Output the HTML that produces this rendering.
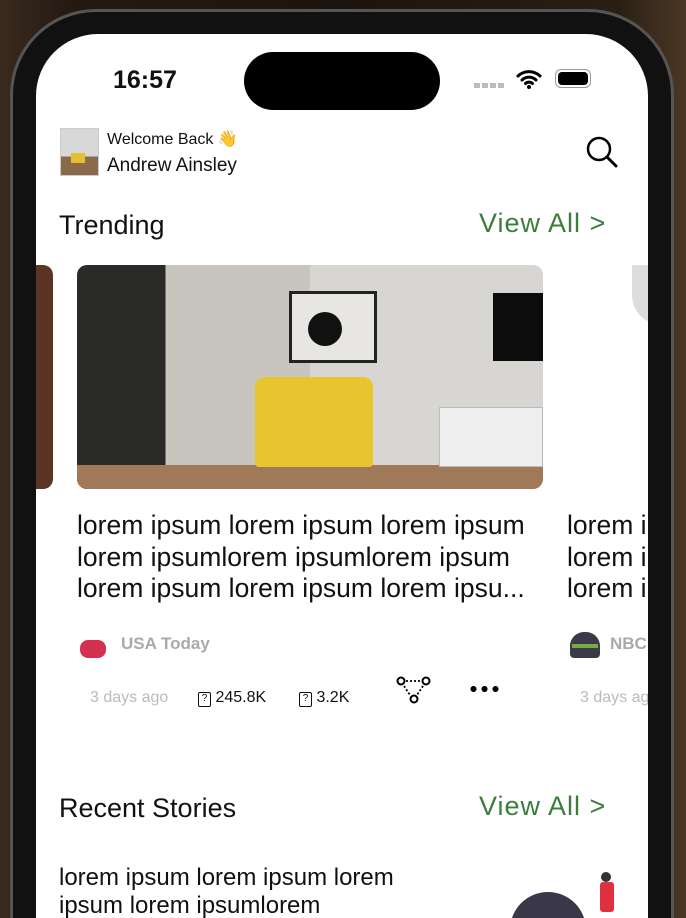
<!DOCTYPE html>
<html style="width:686px;height:918px;overflow:hidden"><head><meta charset="utf-8"><style>
*{margin:0;padding:0;box-sizing:border-box}
body{width:686px;height:918px;overflow:hidden;font-family:"Liberation Sans",sans-serif}
.wrap{position:relative;width:686px;height:918px;overflow:hidden;background:linear-gradient(90deg,#3a2a1e 0%,#241a12 10%,#1c140e 50%,#2a1e14 90%,#4a3826 100%)}
.frame{position:absolute;left:10px;top:9px;width:664px;height:909px;border-radius:86px 86px 0 0;background:#111;border:3px solid #555;border-bottom:none}
.screen{position:absolute;left:36px;top:34px;width:612px;height:884px;border-radius:62px 62px 0 0;background:#fff;overflow:hidden}
.abs{position:absolute}
.t{color:#111}
.va{font-size:27px;color:#3c7d3e;letter-spacing:1px}
</style></head><body><div class="wrap">
<div class="frame"></div>
<div class="screen">
 <div class="abs t" style="left:77px;top:32px;font-size:25px;font-weight:bold">16:57</div>
 <div class="abs" style="left:208px;top:18px;width:196px;height:58px;border-radius:29px;background:#000"></div>
 <div class="abs" style="left:438px;top:49px;width:32px;height:5px;background:repeating-linear-gradient(90deg,#bbb 0 6px,transparent 6px 8px)"></div>
 <svg class="abs" style="left:480px;top:35px" width="26" height="20" viewBox="0 0 26 20"><path d="M2 7a16 16 0 0 1 22 0M6 11a10 10 0 0 1 14 0M9.5 14.5a5 5 0 0 1 7 0" stroke="#000" stroke-width="3" fill="none" stroke-linecap="round"/><circle cx="13" cy="18" r="2" fill="#000"/></svg>
 <div class="abs" style="left:519px;top:35px;width:36px;height:19px;border:1.5px solid #999;border-radius:6px;padding:2px"><div style="width:100%;height:100%;background:#000;border-radius:4px"></div></div>
 <div class="abs" style="left:24px;top:94px;width:39px;height:48px;background:linear-gradient(#d8d8d8 0 60%,#8a6a4a 60%);border:1px solid #ccc"><div style="position:absolute;left:10px;top:24px;width:14px;height:10px;background:#e4c030"></div></div>
 <div class="abs t" style="left:71px;top:95px;font-size:16px">Welcome Back 👋</div>
 <div class="abs t" style="left:71px;top:121px;font-size:19px">Andrew Ainsley</div>
 <svg class="abs" style="left:548px;top:100px" width="36" height="36" viewBox="0 0 36 36"><circle cx="15" cy="15" r="11" stroke="#000" stroke-width="2.5" fill="none"/><path d="M23 23l9 9" stroke="#000" stroke-width="3" stroke-linecap="round"/></svg>
 <div class="abs t" style="left:23px;top:176px;font-size:27px">Trending</div>
 <div class="abs va" style="left:443px;top:174px">View All &gt;</div>
 <div class="abs" style="left:-10px;top:231px;width:27px;height:224px;border-radius:10px;background:#5a3424"></div>
 <div class="abs" style="left:41px;top:231px;width:466px;height:224px;border-radius:10px;overflow:hidden;background:linear-gradient(90deg,#2a2a28 0 19%,#c8c4be 19% 50%,#d8d6d2 50% 100%)">
  <div class="abs" style="left:0;bottom:0;width:100%;height:24px;background:#a07a58"></div>
  <div class="abs" style="left:212px;top:26px;width:88px;height:72px;background:#e8e6e2;border:3px solid #222"><div style="position:absolute;left:16px;top:18px;width:34px;height:34px;border-radius:50%;background:#111"></div></div>
  <div class="abs" style="left:416px;top:28px;width:50px;height:68px;background:#0c0c0c"></div>
  <div class="abs" style="left:362px;top:142px;width:104px;height:60px;background:#eee;border:1px solid #bbb"></div>
  <div class="abs" style="left:178px;top:112px;width:118px;height:90px;background:#e8c42e;border-radius:10px 10px 4px 4px"></div>
 </div>
 <div class="abs" style="left:596px;top:231px;width:40px;height:224px;background:#fff"><div style="position:absolute;left:0;top:0;width:30px;height:60px;border-radius:0 0 0 30px;background:#ddd"></div></div>
 <div class="abs t" style="left:41px;top:476px;font-size:26.5px;line-height:31.5px;width:480px;white-space:nowrap">lorem ipsum lorem ipsum lorem ipsum<br>lorem ipsumlorem ipsumlorem ipsum<br>lorem ipsum lorem ipsum lorem ipsu...</div>
 <div class="abs t" style="left:531px;top:476px;font-size:26.5px;line-height:31.5px;white-space:nowrap">lorem i<br>lorem i<br>lorem i</div>
 <div class="abs" style="left:44px;top:598px;width:28px;height:26px;"><div style="position:absolute;left:0;top:8px;width:26px;height:18px;border-radius:8px;background:#d63050"></div></div>
 <div class="abs" style="left:85px;top:600px;font-size:17px;color:#aaa;font-weight:bold">USA Today</div>
 <div class="abs" style="left:534px;top:598px;width:30px;height:26px;border-radius:14px 14px 4px 4px;background:#3a3a48"><div style="position:absolute;left:2px;top:12px;width:26px;height:4px;background:#7a4;"></div></div>
 <div class="abs" style="left:574px;top:600px;font-size:17px;color:#aaa;font-weight:bold">NBC</div>
 <div class="abs" style="left:54px;top:655px;font-size:16px;color:#bbb">3 days ago</div>
 <div class="abs t" style="left:162px;top:655px;font-size:16px"><span style="display:inline-block;width:13px;height:15px;border:1.3px solid #111;border-radius:2px;font-size:10px;text-align:center;line-height:12px;vertical-align:1px">?</span> 245.8K</div>
 <div class="abs t" style="left:263px;top:655px;font-size:16px"><span style="display:inline-block;width:13px;height:15px;border:1.3px solid #111;border-radius:2px;font-size:10px;text-align:center;line-height:12px;vertical-align:1px">?</span> 3.2K</div>
 <svg class="abs" style="left:360px;top:641px" width="38" height="32" viewBox="0 0 38 32"><circle cx="5" cy="6" r="3.5" stroke="#000" stroke-width="2" fill="none"/><circle cx="30" cy="6" r="3.5" stroke="#000" stroke-width="2" fill="none"/><circle cx="18" cy="24" r="3.5" stroke="#000" stroke-width="2" fill="none"/><path d="M10 6h15M8 11l6 9M27 11l-6 9" stroke="#000" stroke-width="1.8" stroke-dasharray="2 2"/></svg>
 <div class="abs" style="left:432px;top:652px;width:32px;height:6px;background:radial-gradient(circle,#000 2.8px,transparent 3.2px) 0 0/11px 6px repeat-x"></div>
 <div class="abs" style="left:544px;top:655px;font-size:16px;color:#bbb;white-space:nowrap">3 days ago</div>
 <div class="abs t" style="left:23px;top:759px;font-size:27px">Recent Stories</div>
 <div class="abs va" style="left:443px;top:757px">View All &gt;</div>
 <div class="abs t" style="left:23px;top:830px;font-size:24px;line-height:28px;white-space:nowrap">lorem ipsum lorem ipsum lorem<br>ipsum lorem ipsumlorem</div>
 <div class="abs" style="left:474px;top:858px;width:76px;height:60px;border-radius:38px 38px 0 0;background:#3a3848"></div>
 <div class="abs" style="left:564px;top:848px;width:14px;height:30px;background:#e03040;border-radius:3px"></div>
 <div class="abs" style="left:565px;top:838px;width:10px;height:10px;border-radius:50%;background:#333"></div>
</div>
</div></body></html>
